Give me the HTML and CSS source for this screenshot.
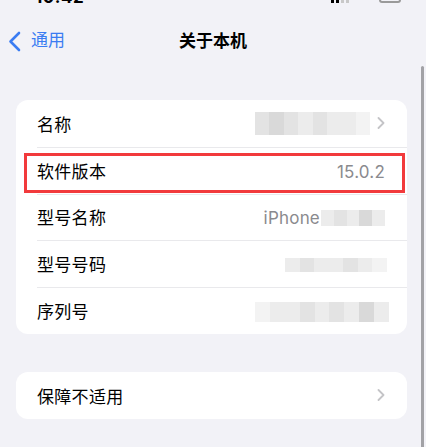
FILE: index.html
```html
<!DOCTYPE html>
<html lang="zh-CN">
<head>
<meta charset="utf-8">
<title>关于本机</title>
<link rel="stylesheet" href="styles.css">
</head>
<body>
<div class="screen">
  <div class="status">
    <div class="status-inner">
      <span class="time">10:42</span>
      <span class="status-icons">
        <span class="bars"><i class="b1"></i><i class="b2"></i><i class="b3"></i><i class="b4"></i></span>
        <span class="battery"></span>
      </span>
    </div>
  </div>
  <div class="nav">
    <div class="back">
      <svg class="back-chev" width="13" height="21" viewBox="0 0 13 21"><path d="M11 2 L2.5 10.5 L11 19" fill="none" stroke="#3a7cf2" stroke-width="2.6" stroke-linecap="round" stroke-linejoin="round"/></svg>
      <span class="back-label">通用</span>
    </div>
    <div class="title">关于本机</div>
  </div>

  <div class="card">
    <div class="row">
      <span class="label">名称</span>
      <span class="value">
        <span class="blur blur-name"><i class="s2"></i><i class="s3"></i><i class="s2"></i><i class="s1"></i><i class="s2"></i><i class="s1"></i><i class="s1"></i><i class="s0"></i></span>
        <svg class="chev" width="8" height="12" viewBox="0 0 8 12"><path d="M1.5 1 L6.5 6 L1.5 11" fill="none" stroke="#c4c4c7" stroke-width="1.8" stroke-linecap="round" stroke-linejoin="round"/></svg>
      </span>
    </div>
    <div class="row">
      <span class="label">软件版本</span>
      <span class="value"><span class="val-text">15.0.2</span></span>
      <span class="highlight"></span>
    </div>
    <div class="row">
      <span class="label">型号名称</span>
      <span class="value"><span class="val-text">iPhone</span><span class="blur blur-model"><i class="s1"></i><i class="s2"></i><i class="s1"></i><i class="s3"></i><i class="s1"></i></span></span>
    </div>
    <div class="row">
      <span class="label">型号号码</span>
      <span class="value"><span class="blur blur-num"><i class="s1"></i><i class="s2"></i><i class="s1"></i><i class="s1"></i><i class="s2"></i><i class="s1"></i><i class="s0"></i></span></span>
    </div>
    <div class="row">
      <span class="label">序列号</span>
      <span class="value"><span class="blur blur-serial"><i class="s0"></i><i class="s1"></i><i class="s1"></i><i class="s2"></i><i class="s1"></i><i class="s2"></i><i class="s1"></i><i class="s3"></i><i class="s1"></i></span></span>
    </div>
  </div>

  <div class="card card-2">
    <div class="row">
      <span class="label">保障不适用</span>
      <span class="value">
        <svg class="chev" width="8" height="12" viewBox="0 0 8 12"><path d="M1.5 1 L6.5 6 L1.5 11" fill="none" stroke="#c4c4c7" stroke-width="1.8" stroke-linecap="round" stroke-linejoin="round"/></svg>
      </span>
    </div>
  </div>

  <div class="scrollbar"></div>
</div>
</body>
</html>
```

FILE: styles.css
```css
* { box-sizing: border-box; }

html, body {
  margin: 0;
  padding: 0;
  background: #f2f2f7;
}

body {
  font-family: Inter, "Noto Sans CJK SC", sans-serif;
  color: #000;
}

.screen {
  position: relative;
  width: 426px;
  height: 447px;
  overflow: hidden;
}

/* status bar, only its bottom edge visible */
.status {
  height: 3px;
  overflow: hidden;
}
.status-inner {
  margin-top: -11px;
  height: 14px;
  display: flex;
  align-items: flex-end;
  justify-content: space-between;
  padding: 0 25px 0 35px;
}
.time {
  font-size: 17px;
  font-weight: 700;
  line-height: 12px;
  letter-spacing: 0.5px;
}
.status-icons {
  display: flex;
  align-items: flex-end;
  gap: 30px;
}
.bars {
  display: flex;
  align-items: flex-end;
  gap: 2px;
}
.bars i {
  display: block;
  width: 3px;
  height: 12px;
  background: #000;
}
.bars i.b3, .bars i.b4 { background: #c8c8c8; }
.battery {
  display: block;
  width: 22px;
  height: 12px;
  border: 2px solid #9a9a9a;
  border-radius: 3px;
}

/* navigation bar */
.nav {
  height: 76px;
  display: flex;
  align-items: center;
  justify-content: center;
  position: relative;
}
.back {
  position: absolute;
  left: 8px;
  top: 26px;
  display: flex;
  align-items: center;
  gap: 10px;
}
.back-chev { display: block; margin-top: 2px; }
.back-label {
  font-size: 17px;
  color: #3a7cf2;
  line-height: 21px;
}
.title {
  font-size: 17px;
  font-weight: 600;
  line-height: 21px;
  margin-top: 1px;
}

/* cards */
.card {
  margin: 21px 19px 0 16px;
  background: #fff;
  border-radius: 12px;
}
.card-2 {
  margin-top: 38px;
}

.row {
  position: relative;
  height: 46.8px;
  display: flex;
  align-items: center;
  justify-content: space-between;
  padding: 3px 22px 0 21px;
}
.row + .row::before {
  content: "";
  position: absolute;
  top: 0;
  left: 21px;
  right: 0;
  height: 1px;
  background: #e9e9ec;
}

.label {
  font-size: 17px;
  line-height: 22px;
  letter-spacing: 0.3px;
}

.value {
  display: flex;
  align-items: center;
  gap: 7px;
  color: #8a8a8e;
  font-size: 17px;
  line-height: 22px;
}
.val-text { letter-spacing: 0.2px; }
.chev { display: block; margin-top: -3px; }

/* pixelated blurs */
.blur {
  display: flex;
  filter: blur(0.6px);
}
.blur i { display: block; height: 100%; flex: 1; }
.blur i.s0 { background: #f3f3f3; }
.blur i.s1 { background: #ececec; }
.blur i.s2 { background: #e3e3e3; }
.blur i.s3 { background: #d9d9d9; }
.blur-name { width: 115px; height: 23px; margin-top: -2px; border-radius: 4px 10px 10px 4px; }
.blur-model { width: 64px; height: 16px; margin-left: -6px; border-radius: 6px; }
.blur-num { width: 102px; height: 14px; border-radius: 6px; margin-right: -2px; }
.blur-serial { width: 134px; height: 20px; margin-right: -4px; border-radius: 8px 2px 2px 8px; }

/* red highlight box */
.highlight {
  position: absolute;
  left: 8px;
  right: 2px;
  top: 6px;
  bottom: 1px;
  border: 3px solid #f23a3c;
  pointer-events: none;
}

.scrollbar {
  position: absolute;
  left: 421px;
  top: 66px;
  width: 3px;
  bottom: 0;
  background: #a2a2a6;
  border-radius: 2px 2px 0 0;
}
```
